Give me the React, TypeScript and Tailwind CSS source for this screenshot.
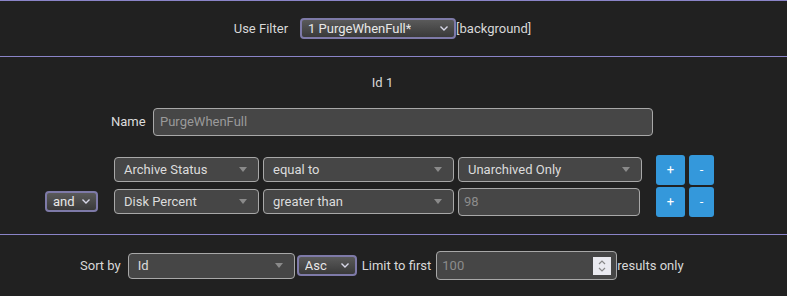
import React from 'react';

const font = { fontFamily: 'Roboto, "Liberation Sans", sans-serif' };

function Chevron() {
  return (
    <svg width="10" height="7" viewBox="0 0 10 7" className="shrink-0">
      <polyline points="1.5,1.5 5,5 8.5,1.5" fill="none" stroke="#d8d8e8" strokeWidth="1.4" />
    </svg>
  );
}

// native-looking select with purple border and gradient
function NativeSelect({ value, className }: { value: string; className: string }) {
  return (
    <div
      className={`flex items-center justify-between rounded-[4px] border-2 border-[#7e7aa8] bg-gradient-to-b from-[#5a5a5a] to-[#3a3a3a] pl-[6px] pr-[5px] text-[13px] text-[#e8e8e8] ${className}`}
    >
      <span className="truncate">{value}</span>
      <Chevron />
    </div>
  );
}

// custom dark select with grey triangle
function DarkSelect({ value, className }: { value: string; className: string }) {
  return (
    <div
      className={`flex items-center justify-between rounded-[4px] border border-[#a8a8a8] bg-[#464646] pl-[9px] pr-[11px] text-[13px] text-[#dcdcdc] ${className}`}
    >
      <span>{value}</span>
      <svg width="8" height="5" viewBox="0 0 8 5">
        <polygon points="0,0 8,0 4,5" fill="#8a8a8a" />
      </svg>
    </div>
  );
}

function Btn({ label }: { label: string }) {
  return (
    <div className="flex h-[30px] items-center justify-center rounded-[3px] bg-[#3498db] text-[13px] text-white">
      {label}
    </div>
  );
}

export default function App() {
  return (
    <div className="h-[296px] w-[787px] overflow-hidden bg-[#212121] text-[#d4d4d4]" style={font}>
      {/* filter bar */}
      <div className="flex h-[57px] items-center justify-center border-t border-b border-[#8a84c8] pr-[22px] text-[13px]">
        <span className="mr-[12px] text-[#d8d8d8]">Use Filter</span>
        <NativeSelect value="1 PurgeWhenFull*" className="h-[21px] w-[156px]" />
        <span className="text-[#d8d8d8]">[background]</span>
      </div>

      {/* filter editor */}
      <div className="h-[178px] border-b border-[#8a84c8]">
        <div className="pt-[16px] pr-[22px] text-center text-[13px] text-[#d8d8d8]">Id 1</div>
        <div className="mt-[15px] flex h-[28px] items-center">
          <span className="ml-[111px] w-[42px] text-[13px] text-[#dcdcdc]">Name</span>
          <div className="flex h-[28px] w-[500px] items-center rounded-[4px] border border-[#a8a8a8] bg-[#464646] px-[6px] text-[13px] text-[#9a9a9a]">
            PurgeWhenFull
          </div>
        </div>

        <div className="mt-[19px] flex items-center">
          <div className="ml-[114px] flex gap-[4px]">
            <DarkSelect value="Archive Status" className="h-[25px] w-[145px]" />
            <DarkSelect value="equal to" className="h-[25px] w-[191px]" />
          </div>
          <DarkSelect value="Unarchived Only" className="ml-[4px] h-[25px] w-[184px]" />
          <div className="ml-[14px] grid grid-cols-[29px_25px] gap-[4px]">
            <Btn label="+" />
            <Btn label="-" />
          </div>
        </div>

        <div className="mt-[2px] flex items-center">
          <NativeSelect value="and" className="ml-[45px] h-[21px] w-[53px]" />
          <div className="ml-[16px] flex gap-[4px]">
            <DarkSelect value="Disk Percent" className="h-[25px] w-[145px]" />
            <DarkSelect value="greater than" className="h-[25px] w-[191px]" />
          </div>
          <div className="ml-[4px] flex h-[28px] w-[182px] items-center rounded-[4px] border border-[#a8a8a8] bg-[#464646] px-[5px] text-[13px] text-[#8c8c8c]">
            98
          </div>
          <div className="ml-[16px] grid grid-cols-[29px_25px] gap-[4px]">
            <Btn label="+" />
            <Btn label="-" />
          </div>
        </div>
      </div>

      {/* sort bar */}
      <div className="flex h-[61px] items-center text-[13px]">
        <span className="ml-[80px] mr-[7px] text-[#d8d8d8]">Sort by</span>
        <DarkSelect value="Id" className="h-[26px] w-[167px]" />
        <NativeSelect value="Asc" className="ml-[2px] h-[21px] w-[60px]" />
        <span className="ml-[5px] mr-[5px] text-[#d8d8d8]">Limit to first</span>
        <div className="flex h-[29px] w-[181px] items-center justify-between rounded-[4px] border border-[#a8a8a8] bg-[#464646] pl-[5px] pr-[5px] text-[#8c8c8c]">
          <span>100</span>
          <div className="flex h-[18px] w-[18px] flex-col items-center justify-center gap-[2px] bg-[#eaeaf0]">
            <svg width="8" height="5" viewBox="0 0 8 5">
              <polyline points="1,4 4,1 7,4" fill="none" stroke="#888" strokeWidth="1.2" />
            </svg>
            <svg width="8" height="5" viewBox="0 0 8 5">
              <polyline points="1,1 4,4 7,1" fill="none" stroke="#888" strokeWidth="1.2" />
            </svg>
          </div>
        </div>
        <span className="text-[#d8d8d8]">results only</span>
      </div>
    </div>
  );
}
